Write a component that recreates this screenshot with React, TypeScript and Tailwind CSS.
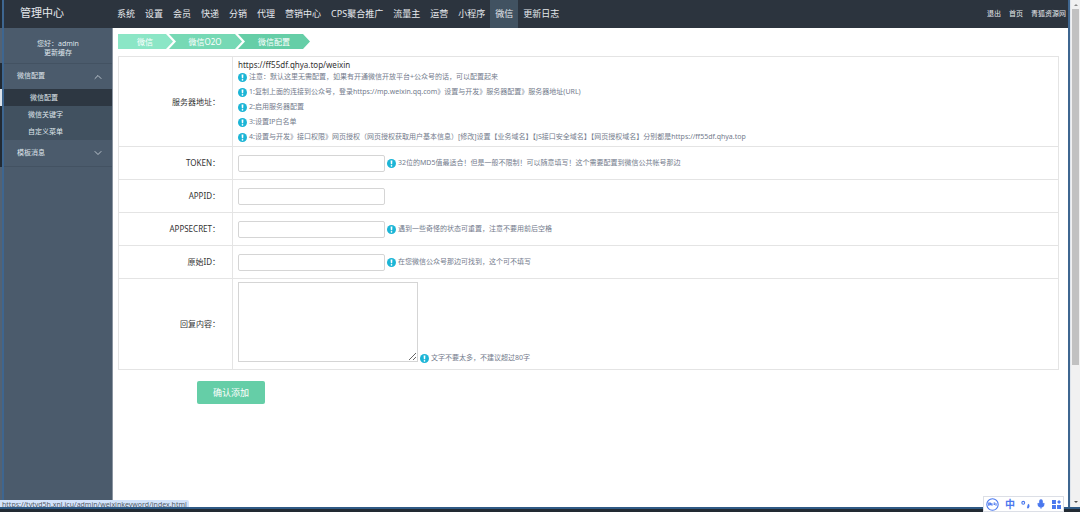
import { useState } from "react";
import type { ReactNode } from "react";
import { ChevronDown, ChevronUp, Mic } from "lucide-react";

const NAV_ITEMS = [
  "系统", "设置", "会员", "快递", "分销", "代理", "营销中心",
  "CPS聚合推广", "流量主", "运营", "小程序", "微信", "更新日志",
];

const SUB_ITEMS = ["微信配置", "微信关键字", "自定义菜单"];

const SERVER_TIPS = [
  "注意：默认这里无需配置，如果有开通微信开放平台+公众号的话，可以配置起来",
  "1:复制上面的连接到公众号，登录https://mp.weixin.qq.com》设置与开发》服务器配置》服务器地址(URL)",
  "2:启用服务器配置",
  "3:设置IP白名单",
  "4:设置与开发》接口权限》网页授权（网页授权获取用户基本信息）[修改]设置【业务域名】【JS接口安全域名】【网页授权域名】分别都是https://ff55df.qhya.top",
];

const FIELDS = [
  { id: "token", label: "TOKEN：", tip: "32位的MD5值最适合！但是一般不限制！可以随意填写！这个需要配置到微信公共帐号那边" },
  { id: "appid", label: "APPID：", tip: "" },
  { id: "appsecret", label: "APPSECRET：", tip: "遇到一些奇怪的状态可重置，注意不要用前后空格" },
  { id: "original-id", label: "原始ID：", tip: "在您微信公众号那边可找到，这个可不填写" },
];

function Tip({ children }: { children: ReactNode }) {
  return (
    <span className="flex h-[15px] items-center gap-[2px] text-[7px] whitespace-nowrap text-[#737b8c]">
      <svg viewBox="0 0 18 18" className="h-[9px] w-[9px] flex-shrink-0" aria-hidden="true">
        <circle cx="9" cy="9" r="9" fill="#1cb5d6" />
        <path d="M7.2 3h3.6l-.5 7.4H7.7z" fill="#fff" />
        <circle cx="9" cy="13.6" r="1.7" fill="#fff" />
      </svg>
      {children}
    </span>
  );
}

function Header() {
  return (
    <header className="flex h-7 items-center bg-[#2c343e] text-[#e6e9ed]">
      <h1 className="w-[108px] flex-shrink-0 pb-[3px] pl-4 text-[11px] leading-none">管理中心</h1>
      <nav className="flex h-full">
        {NAV_ITEMS.map((item) => (
          <a
            key={item}
            href="#"
            className={`flex h-full items-center px-[5px] text-[9px] whitespace-nowrap ${item === "微信" ? "bg-[#415261]" : ""}`}
          >
            {item}
          </a>
        ))}
      </nav>
      <nav className="ml-auto flex gap-2 pr-[2px] text-[7px] whitespace-nowrap">
        <a href="#">退出</a>
        <a href="#">首页</a>
        <a href="#">青狐资源网</a>
      </nav>
    </header>
  );
}

function Sidebar() {
  const [configOpen, setConfigOpen] = useState(true);
  const [templateOpen, setTemplateOpen] = useState(false);

  return (
    <aside className="w-[109px] flex-shrink-0 border-r border-[#8b95a1] bg-[#4b5b6c] text-[7px] text-[#dfe5eb]">
      <div className="flex h-9 flex-col items-center justify-center border-b border-[#435262] pt-1 leading-[9px]">
        <span>您好：admin</span>
        <a href="#">更新缓存</a>
      </div>
      <button
        type="button"
        onClick={() => setConfigOpen(!configOpen)}
        className="flex h-[25px] w-full items-center justify-between pr-2 pl-[13px]"
      >
        微信配置
        {configOpen ? <ChevronUp className="h-3 w-3" strokeWidth={1.5} /> : <ChevronDown className="h-3 w-3" strokeWidth={1.5} />}
      </button>
      {configOpen && (
        <ul className="bg-[#415160]">
          {SUB_ITEMS.map((item, i) => (
            <li key={item}>
              <a
                href="#"
                className={`flex h-[17px] items-center pt-[2px] ${i === 0 ? "bg-[#2d3742] pl-[26px]" : "pl-6"}`}
              >
                {item}
              </a>
            </li>
          ))}
        </ul>
      )}
      <button
        type="button"
        onClick={() => setTemplateOpen(!templateOpen)}
        className="flex h-[27px] w-full items-center justify-between border-b border-[#435262] pr-2 pl-[13px]"
      >
        模板消息
        {templateOpen ? <ChevronUp className="h-3 w-3" strokeWidth={1.5} /> : <ChevronDown className="h-3 w-3" strokeWidth={1.5} />}
      </button>
    </aside>
  );
}

function Breadcrumb() {
  return (
    <nav className="grid w-[193px] grid-cols-1 grid-rows-1">
      <svg viewBox="0 0 193 15" className="col-start-1 row-start-1 h-[15px] w-full" aria-hidden="true">
        <path d="M0 0h48l7 7.5-7 7.5H0z" fill="#8be6c6" />
        <path d="M51 0h66l7 7.5-7 7.5H51l7-7.5z" fill="#76d9b5" />
        <path d="M120 0h65l7 7.5-7 7.5h-65l7-7.5z" fill="#65cea7" />
      </svg>
      <div className="col-start-1 row-start-1 flex items-center text-[8px] leading-[15px] text-white">
        <a href="#" className="w-[54px] text-center">微信</a>
        <a href="#" className="w-[66px] text-center">微信O2O</a>
        <a href="#" className="w-[72px] text-center">微信配置</a>
      </div>
    </nav>
  );
}

function ConfigForm() {
  return (
    <form onSubmit={(e) => e.preventDefault()}>
      <table className="mt-[7px] w-full border-collapse text-[8px] text-[#333]">
        <tbody>
          <tr className="border border-[#e4e4e4]">
            <th scope="row" className="w-[114px] border-r border-[#e4e4e4] pr-3 text-right font-normal">服务器地址：</th>
            <td className="h-[90px] pt-[2px] pl-[5px] align-top">
              <p className="leading-[11px]">https://ff55df.qhya.top/weixin</p>
              {SERVER_TIPS.map((tip) => <Tip key={tip}>{tip}</Tip>)}
            </td>
          </tr>
          {FIELDS.map((field) => (
            <tr key={field.id} className="border border-[#e4e4e4]">
              <th scope="row" className="border-r border-[#e4e4e4] pr-3 text-right font-normal">
                <label htmlFor={field.id}>{field.label}</label>
              </th>
              <td className="h-[33px] pl-[5px]">
                <div className="flex items-center gap-[2px]">
                  <input
                    id={field.id}
                    type="text"
                    className="h-[17px] w-[147px] rounded-[2px] border border-[#d5d5d5] px-1 outline-none"
                  />
                  {field.tip && <Tip>{field.tip}</Tip>}
                </div>
              </td>
            </tr>
          ))}
          <tr className="border border-[#e4e4e4]">
            <th scope="row" className="border-r border-[#e4e4e4] pr-3 text-right font-normal">
              <label htmlFor="reply">回复内容：</label>
            </th>
            <td className="h-[91px] pt-[3px] pl-[5px] align-top">
              <div className="flex items-end gap-[2px]">
                <textarea id="reply" className="mb-1 h-20 w-[180px] border border-[#d5d5d5] p-1 outline-none" />
                <Tip>文字不要太多，不建议超过80字</Tip>
              </div>
            </td>
          </tr>
        </tbody>
      </table>
      <button type="submit" className="mt-[11px] ml-[79px] h-[23px] w-[68px] rounded-[2px] bg-[#65cea7] text-[9px] text-white">
        确认添加
      </button>
    </form>
  );
}

// Browser scrollbar on the right of the window
function Scrollbar() {
  return (
    <div className="flex w-[9px] flex-col items-center justify-between bg-[#f1f1f1] py-1">
      <div className="flex w-full flex-col items-center gap-[3px]">
        <svg viewBox="0 0 4 2" className="h-[2px] w-1"><path d="M0 2l2-2 2 2z" fill="#8a8a8a" /></svg>
        <div className="h-[356px] w-[7px] bg-[#c1c1c1]" />
      </div>
      <svg viewBox="0 0 4 2" className="h-[2px] w-1"><path d="M0 0l2 2 2-2z" fill="#505050" /></svg>
    </div>
  );
}

function ImeToolbar() {
  return (
    <div className="absolute right-4 bottom-0 flex h-4 items-center gap-[6px] border border-[#dcdfe6] bg-white px-[2px] text-[#4a78ee]">
      <svg viewBox="0 0 24 24" className="h-[13px] w-[13px]" fill="none" stroke="currentColor" strokeWidth="2">
        <circle cx="12" cy="12" r="10.5" />
        <path d="M5 14.5v-5h2.5a1.5 1.5 0 0 1 0 3H5M11 9.5v5M14 9.5h3M14 12h2.5M18.5 9.5v5" />
      </svg>
      <span className="text-[10px] leading-none font-bold">中</span>
      <svg viewBox="0 0 16 16" className="h-[9px] w-[9px]" fill="none" stroke="currentColor" strokeWidth="2">
        <circle cx="4" cy="5" r="2.5" />
        <path d="M12 8.500c2.500 1 1.500 4-.8 5.500" strokeWidth="3.5" />
      </svg>
      <Mic className="h-[10px] w-[10px]" fill="currentColor" strokeWidth={2.5} />
      <svg viewBox="0 0 16 16" className="h-[9px] w-[9px]" fill="currentColor">
        <path d="M0 0h7v7H0zM0 9h7v7H0zM9 9h7v7H9zM12.500 0L16 3.500 12.500 7 9 3.500z" />
      </svg>
    </div>
  );
}

export default function App() {
  return (
    <div className="relative flex min-h-screen flex-col overflow-hidden bg-white font-['Noto_Sans','Noto_Sans_CJK_SC',sans-serif]">
      <div className="flex flex-1">
        {/* Left window edge */}
        <div className="flex w-1 flex-shrink-0 flex-col border-r-2 border-[#3e6690] bg-[#536273]">
          <div className="h-7 bg-[#222a33]" />
          <div className="mt-[35px] h-[26px] bg-[#222a33]" />
          <div className="h-[17px] bg-[#dde3ea]" />
          <div className="h-[61px] bg-[#222a33]" />
        </div>
        <div className="flex min-w-0 flex-1 flex-col">
          <Header />
          <div className="flex flex-1">
            <Sidebar />
            <main className="min-w-0 flex-1 bg-white pt-[6px] pr-[9px] pl-[5px]">
              <Breadcrumb />
              <ConfigForm />
            </main>
          </div>
        </div>
        <div className="w-[3px] flex-shrink-0 border-l-2 border-[#3e6690] bg-[#dfe5ec]" />
        <Scrollbar />
      </div>
      <div className="h-[5px] border-t-2 border-[#2f5a85] bg-[#222a33]" />

      {/* Link address shown by the browser while hovering */}
      <div className="absolute bottom-[5px] left-0 h-[7px] overflow-hidden rounded-tr-[2px] bg-[#d3e3fb] px-[2px] text-[7px] leading-[10px] whitespace-nowrap text-[#555d68]">
        https://tytyd5h.xnl.icu/admin/weixinkeyword/index.html
      </div>
      <ImeToolbar />
    </div>
  );
}
